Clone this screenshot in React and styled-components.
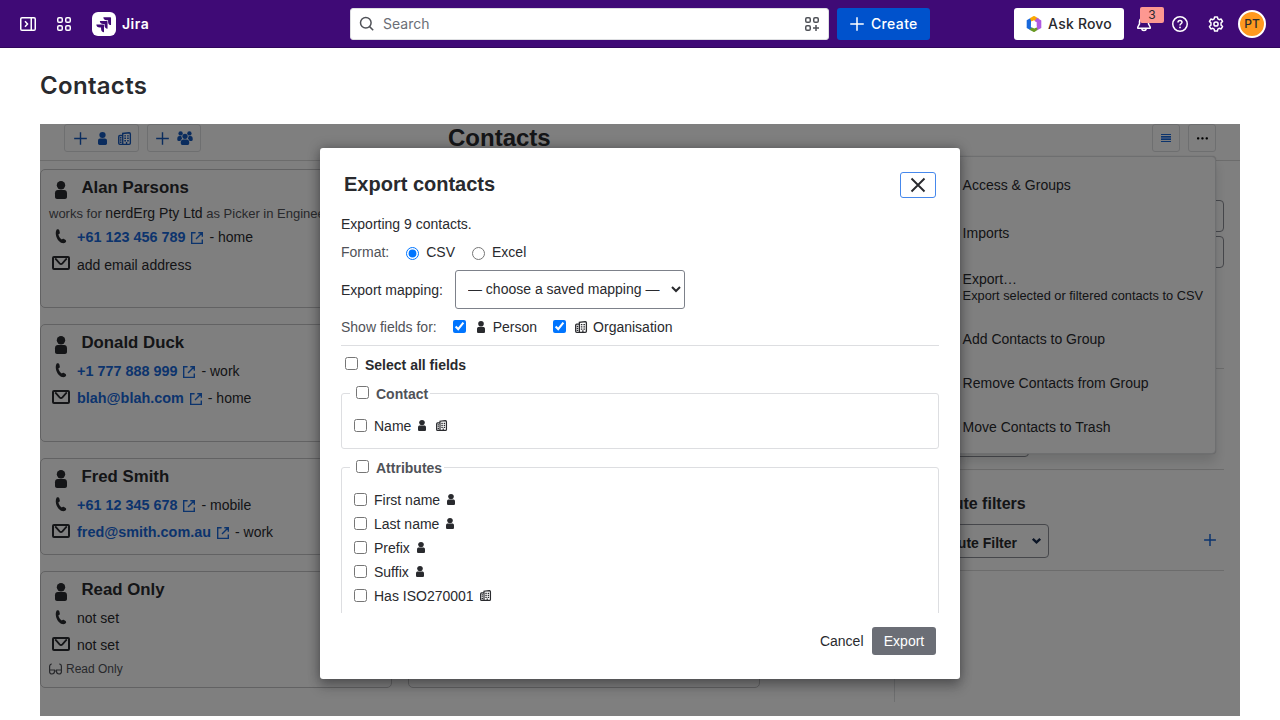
import React from 'react'
import styled, { createGlobalStyle } from 'styled-components'

const GlobalStyle = createGlobalStyle`
    * {
        box-sizing: border-box;
    }
    body {
        margin: 0;
        background: #fff;
        color: #292a2e;
        font-family: 'Liberation Sans', Arial, sans-serif;
        font-size: 14px;
        line-height: 20px;
        overflow: hidden;
    }
`

/* ---------- icons ---------- */

const Svg = styled.svg`
    display: block;
    flex: none;
    overflow: visible;
`

const LineIcon = ({ size = 16, weight = 1.5, children }) => (
    <Svg width={size} height={size} viewBox="0 0 16 16" fill="none" stroke="currentColor" strokeWidth={weight}>
        {children}
    </Svg>
)

const SidebarIcon = () => (
    <LineIcon>
        <rect x="0.75" y="1.75" width="14.5" height="12.5" rx="1.25" />
        <path d="M11.25 2v12M5 5.25 7.5 8 5 10.75" />
    </LineIcon>
)

const SwitcherIcon = () => (
    <LineIcon>
        <rect x="1.75" y="1.75" width="4.5" height="4.5" rx="1.25" />
        <rect x="9.75" y="1.75" width="4.5" height="4.5" rx="1.25" />
        <rect x="1.75" y="9.75" width="4.5" height="4.5" rx="1.25" />
        <rect x="9.75" y="9.75" width="4.5" height="4.5" rx="1.25" />
    </LineIcon>
)

const AppsAddIcon = () => (
    <LineIcon>
        <rect x="1.75" y="1.75" width="4.5" height="4.5" rx="1.25" />
        <rect x="9.75" y="1.75" width="4.5" height="4.5" rx="1.25" />
        <rect x="1.75" y="9.75" width="4.5" height="4.5" rx="1.25" />
        <path d="M12 9v6M9 12h6" />
    </LineIcon>
)

const SearchIcon = () => (
    <LineIcon>
        <circle cx="6.8" cy="6.8" r="5.3" />
        <path d="m10.6 10.6 3.6 3.6" />
    </LineIcon>
)

const PlusIcon = ({ size = 16, weight = 1.5 }) => (
    <LineIcon size={size} weight={weight}>
        <path d="M8 1.25v13.5M1.25 8h13.5" />
    </LineIcon>
)

const BellIcon = () => (
    <LineIcon>
        <path d="M3.5 5.6a4.5 4.5 0 0 1 9 0v2.2l1.7 3.2v1.25H1.8V11l1.7-3.2zM5.6 12.5a2.45 2.45 0 0 0 4.8 0" strokeLinejoin="round" />
    </LineIcon>
)

const HelpIcon = () => (
    <LineIcon>
        <circle cx="8" cy="8" r="7.25" />
        <path d="M6 6.4C6 5.2 6.9 4.5 8 4.5s2 .7 2 1.8c0 1.5-2 1.5-2 3.2" />
        <circle cx="8" cy="11.4" r="0.9" fill="currentColor" stroke="none" />
    </LineIcon>
)

const GearIcon = () => (
    <LineIcon>
        <path
            strokeLinejoin="round"
            d="M6.6.9h2.8l.45 2 1.35.78 1.95-.6 1.4 2.42-1.5 1.4v2.2l1.5 1.4-1.4 2.42-1.95-.6-1.35.78-.45 2H6.6l-.45-2-1.35-.78-1.95.6L1.45 10.5l1.5-1.4V6.9l-1.5-1.4 1.4-2.42 1.95.6 1.35-.78z"
        />
        <circle cx="8" cy="8" r="2.1" />
    </LineIcon>
)

const JiraMark = () => (
    <Svg width="24" height="24" viewBox="0 0 24 24">
        <rect width="24" height="24" rx="6" fill="#fff" />
        <path
            fill="#3f0a76"
            d="M9.051 15.434H7.734c-1.988 0-3.413-1.218-3.413-3h7.085c.367 0 .605.26.605.63v7.13c-1.772 0-2.96-1.435-2.96-3.434zm3.5-3.543h-1.318c-1.987 0-3.413-1.196-3.413-2.978h7.085c.367 0 .627.239.627.608v7.13c-1.772 0-2.981-1.435-2.981-3.434zm3.52-3.522h-1.317c-1.987 0-3.413-1.217-3.413-3h7.085c.367 0 .605.262.605.61v7.129c-1.771 0-2.96-1.435-2.96-3.434z"
        />
    </Svg>
)

const RovoMark = () => (
    <Svg width="16" height="16" viewBox="0 0 16 16">
        <path fill="#1868db" d="M.7 4.2 5 1.7v4.9L4.9 11l2.9 1.8-2.6 1.6L.7 12z" />
        <path fill="#fca700" d="M3.9 2.3 7.2.3a1.6 1.6 0 0 1 1.6 0l4.2 2.4-2.4 3L8 4.3 5.4 5.6z" />
        <path fill="#af59e1" d="m11 1.8 4.3 2.8v7.5l-4.6 2.3V6.3L8.6 5z" />
        <path fill="#6a9a23" d="m3.2 13.4 5-3.2 3.1 1.7v2.2L8.8 15.7a1.6 1.6 0 0 1-1.6 0z" />
        <path fill="#fff" d="m5.4 6.1 2.4-1.4v3.8l2.6 1.7v1.2l-2.2 1.2-2.8-1.6z" />
    </Svg>
)

const PersonIcon = ({ width = 12, height = 18 }) => (
    <Svg width={width} height={height} viewBox="0 0 12 18" preserveAspectRatio="none" fill="currentColor">
        <circle cx="6" cy="4.2" r="4.2" />
        <path d="M0 12.2C0 10 1.2 9.1 2.8 9.1h6.4c1.6 0 2.8.9 2.8 3.1V16c0 1.3-.9 2-2 2H2c-1.1 0-2-.7-2-2z" />
    </Svg>
)

const OrgIcon = ({ size = 13 }) => (
    <Svg width={size} height={size} viewBox="0 0 14 14" fill="none" stroke="currentColor" strokeWidth="1.5">
        <path d="M5.1 13.3V1.6L12 .8q1.3 0 1.3 1.3v10q0 1.2-1.3 1.2H2q-1.2 0-1.2-1.2V5q0-1.3 1.2-1.3h3" />
        <path d="M6.8 4.2h1.8M9.8 4.2h1.8M6.8 6.8h1.8M9.8 6.8h1.8M6.8 9.4h1.8M9.8 9.4h1.8M2 6.2h1.8M2 8.6h1.8M2 11h1.8M9.2 13.2v-2.4" />
    </Svg>
)

const GroupIcon = () => (
    <Svg width="16" height="14" viewBox="0 0 16 14" fill="currentColor">
        <circle cx="3.6" cy="2.4" r="2.2" />
        <circle cx="12.4" cy="2.4" r="2.2" />
        <path d="M.3 7.6C.3 5.8 1.3 5 2.6 5h1.6l.9 2.6L3.3 10H1.5C.7 10 .3 9.5.3 8.8zM15.7 7.6c0-1.8-1-2.6-2.3-2.6h-1.6l-.9 2.6 1.8 2.4h1.8c.8 0 1.2-.5 1.2-1.2z" />
        <circle cx="8" cy="5.3" r="2.6" />
        <path d="M3.8 11.2c0-1.9 1-2.8 2.6-2.8h3.2c1.6 0 2.6.9 2.6 2.8v1c0 1.1-.7 1.8-1.8 1.8H5.6c-1.1 0-1.8-.7-1.8-1.8z" />
    </Svg>
)

const PhoneIcon = () => (
    <Svg width="12" height="15" viewBox="0 0 12 15" fill="currentColor">
        <path d="M1.7.6C2.8-.2 4 .1 4.3 1.2l.5 2.3c.2 1-.5 1.5-1.4 1.8.3 2.2 1.6 4.2 3.4 5.2.7-.7 1.4-1 2.2-.5l1.6 1.1c1 .8.7 2-.5 2.7-1.8 1-4.4.2-6.5-2.1C.9 8.7-.2 3.4 1.7.6z" />
    </Svg>
)

const MailIcon = () => (
    <Svg width="18" height="14" viewBox="0 0 18 14" fill="none" stroke="currentColor" strokeWidth="2">
        <rect x="1" y="1" width="16" height="12" rx="1" />
        <path d="M3.2 2.4 7.6 7.4q1.4 1.5 2.8 0l4.4-5" strokeWidth="1.8" />
    </Svg>
)

const ExternalIcon = () => (
    <Svg width="12" height="12" viewBox="0 0 12 12" fill="none" stroke="currentColor" strokeWidth="1.4">
        <path d="M4.6.8H.7v10.6h10.6V7.4M7.3.7h4v4M11.2.8 5 7" />
    </Svg>
)

const GlassesIcon = () => (
    <Svg width="13" height="12" viewBox="0 0 13 12" fill="none" stroke="currentColor" strokeWidth="1.2">
        <path d="M2.8 1C1.3 1 .6 2.2.6 3.6v5.2c0 1.5.8 2.2 2.4 2.2s2.5-.8 2.5-2.4V7H.8M10.2 1c1.5 0 2.2 1.2 2.2 2.6v5.2c0 1.5-.8 2.2-2.4 2.2s-2.5-.8-2.5-2.4V7h4.7M5.5 8h2" />
    </Svg>
)

const ListIcon = () => (
    <Svg width="10" height="8" viewBox="0 0 10 8">
        <rect y="2" width="10" height="4" fill="#669df1" />
        <path d="M0 .5h10M0 2.5h10M0 5.5h10M0 7.5h10" stroke="#1868db" strokeWidth="1" />
    </Svg>
)

const MoreIcon = () => (
    <Svg width="11" height="3" viewBox="0 0 11 3" fill="#000">
        <rect x="0" y="0.3" width="2.3" height="2.3" rx="0.8" />
        <rect x="4.3" y="0.3" width="2.3" height="2.3" rx="0.8" />
        <rect x="8.6" y="0.3" width="2.3" height="2.3" rx="0.8" />
    </Svg>
)

const CloseIcon = () => (
    <Svg width="14" height="14" viewBox="0 0 14 14" stroke="#292a2e" strokeWidth="1.9">
        <path d="m.5.5 13 13M13.5.5l-13 13" />
    </Svg>
)

const ChevronIcon = () => (
    <Svg width="9" height="6" viewBox="0 0 9 6" fill="none" stroke="#172b4d" strokeWidth="2.4">
        <path d="m.8.8 3.7 3.6L8.2.8" />
    </Svg>
)

/* ---------- top navigation ---------- */

const TopBar = styled.header`
    display: flex;
    align-items: center;
    height: 48px;
    padding: 0 14px 0 20px;
    background: #3f0a76;
    border-bottom: 1px solid #30065c;
    color: #fff;
    font: 500 14px/20px Inter, sans-serif;
`

const NavStart = styled.div`
    display: flex;
    align-items: center;
    gap: 20px;
    width: 330px;
    padding-top: 1px;
`

const Brand = styled.div`
    display: flex;
    align-items: center;
    gap: 6px;
    font-weight: 600;
    letter-spacing: 0.5px;
`

const SearchBox = styled.div`
    display: flex;
    align-items: center;
    gap: 8px;
    width: 479px;
    height: 32px;
    margin-top: 1px;
    padding: 0 8px;
    border: 1px solid #dddee1;
    border-radius: 3px;
    background: #fff;
    color: #505258;
    font-weight: 400;

    span {
        flex: 1;
        color: #6b6e76;
    }
`

const NavButton = styled.button`
    display: flex;
    align-items: center;
    gap: ${props => props.$gap}px;
    height: 32px;
    margin: 1px 0 0 8px;
    padding: 0 12px;
    border: 0;
    border-radius: 3px;
    background: ${props => (props.$primary ? '#0052cc' : '#fff')};
    color: ${props => (props.$primary ? '#fff' : '#292a2e')};
    font: inherit;
    letter-spacing: ${props => (props.$primary ? 0.35 : 0.2)}px;
    white-space: nowrap;
`

const NavEnd = styled.div`
    display: flex;
    align-items: center;
    margin: 1px 0 0 auto;

    ${NavButton} {
        margin: 0 12px 0 0;
    }
`

const NavIcon = styled.div`
    position: relative;
    margin-right: 20px;
`

const Badge = styled.span`
    position: absolute;
    top: -9px;
    left: 4px;
    width: 24px;
    height: 16px;
    border-radius: 2px;
    background: #fd9891;
    color: #292a2e;
    font-size: 12px;
    font-weight: 400;
    line-height: 16px;
    text-align: center;
`

const Avatar = styled.div`
    display: flex;
    align-items: center;
    justify-content: center;
    width: 28px;
    height: 28px;
    margin-left: -6px;
    border: 2px solid #fff;
    border-radius: 50%;
    background: #ff991f;
    color: #292a2e;
    font-size: 12px;
    font-weight: 500;
`

/* ---------- page ---------- */

const PageTitle = styled.h1`
    height: 76px;
    margin: 0;
    padding: 24px 40px 0;
    font: 600 24px/28px Inter, sans-serif;
    letter-spacing: 0.3px;
`

const Frame = styled.main`
    position: relative;
    width: 1200px;
    height: 592px;
    margin: 0 40px;
    overflow: hidden;
`

const Toolbar = styled.div`
    display: flex;
    align-items: flex-start;
    height: 37px;
    padding: 0 24px;
    border-bottom: 1px solid #d8d8d8;
`

const ToolGroup = styled.div`
    display: flex;
    gap: 8px;
    width: ${props => (props.$wide ? '384px' : 'auto')};
`

const ToolButton = styled.button`
    display: flex;
    align-items: center;
    justify-content: center;
    gap: ${props => props.$gap || 0}px;
    width: ${props => props.$width}px;
    height: 28px;
    padding: 0;
    border: 1px solid #dddee1;
    border-radius: 3px;
    background: transparent;
    color: #1558bc;
`

const AppTitle = styled.h2`
    flex: 1;
    margin: 0;
    font-size: 24px;
    line-height: 28px;
`

const Columns = styled.div`
    display: flex;
    justify-content: space-between;
    padding-right: 16px;
`

const CardGrid = styled.div`
    display: grid;
    grid-template-columns: repeat(2, 352px);
    grid-template-rows: 139px 118px 97px 117px;
    gap: 16px;
    padding-top: 8px;
`

const Card = styled.section`
    padding: 6px 8px;
    border: 1px solid #c4c4c6;
    border-radius: 5px;
    overflow: hidden;
    white-space: nowrap;
`

const CardName = styled.h3`
    display: flex;
    gap: 14.5px;
    height: 26.5px;
    margin: 0;
    padding-left: 6px;
    font-size: 16.8px;
    line-height: 24px;

    svg {
        margin-top: 5px;
    }
`

const WorksFor = styled.div`
    height: 21px;
    color: #505258;
    font-size: 13px;
    line-height: 20px;

    span {
        color: #292a2e;
        font-size: 14px;
    }
`

const ContactRow = styled.div`
    display: flex;
    align-items: center;
    height: 27px;
    line-height: 27px;
`

const RowIcon = styled.div`
    display: flex;
    justify-content: center;
    width: 24px;
    margin: 0 4px 2px 0;
`

const ContactLink = styled.a`
    display: flex;
    align-items: center;
    gap: 6px;
    margin-right: 6px;
    color: #1868db;
    font-size: 14.4px;
    font-weight: bold;

    svg {
        margin-top: 2px;
    }
`

const AddDetail = styled.div`
    padding-top: 2px;
`

const ReadOnly = styled.div`
    display: flex;
    align-items: center;
    gap: 4px;
    color: #505258;
    font-size: 12px;
`

const Sidebar = styled.aside`
    width: 330px;
    height: 541px;
    padding: 39px 0 0 16px;
    border-left: 1px solid #dddee1;
`

const FilterInput = styled.div`
    height: 32px;
    margin-bottom: 4px;
    border: 1px solid #8c8f97;
    border-radius: 4px;
`

const FilterSection = styled.div`
    display: flex;
    flex-direction: column;
    justify-content: flex-end;
    height: ${props => props.$height}px;
    padding-bottom: 12px;
    border-bottom: 1px solid #d8d8d8;
`

const FilterTitle = styled.h4`
    margin: 0 0 10px;
    font-size: 16px;
`

const FilterRow = styled.div`
    display: flex;
    align-items: center;
    justify-content: space-between;
    padding-right: 7px;
    color: #1868db;

    > svg {
        margin-bottom: 2px;
    }
`

const FilterSelect = styled.div`
    display: flex;
    align-items: center;
    justify-content: space-between;
    width: ${props => props.$width}px;
    height: 34px;
    padding: 3px 7.5px 0 8.5px;
    border: 1px solid #8c8f97;
    border-radius: 4px;
    color: #292a2e;
    font-weight: bold;

    svg {
        margin-bottom: 3px;
    }
`

const Menu = styled.ul`
    position: absolute;
    top: 32px;
    right: 24px;
    width: 267px;
    height: 298px;
    margin: 0;
    padding: 4px 12px 4px 12.6px;
    border: 1px solid #dddee1;
    border-radius: 4px;
    background: #fff;
    box-shadow: 0 8px 12px rgba(30, 31, 33, 0.15), 0 0 1px rgba(30, 31, 33, 0.3);
    list-style: none;
    white-space: nowrap;
`

const MenuItem = styled.li`
    display: flex;
    flex-direction: column;
    justify-content: center;
    height: ${props => props.$height}px;
    line-height: 17px;

    small {
        font-size: 12.8px;
        line-height: 16px;
    }
`

/* ---------- dialog ---------- */

const Overlay = styled.div`
    position: absolute;
    inset: 0;
    display: flex;
    align-items: flex-start;
    justify-content: center;
    padding-top: 24px;
    background: rgba(0, 0, 0, 0.5);
`

const Dialog = styled.div`
    display: flex;
    flex-direction: column;
    width: 640px;
    height: 531px;
    border-radius: 3px;
    background: #fff;
    box-shadow: 0 8px 12px rgba(30, 31, 33, 0.3), 0 0 12px rgba(30, 31, 33, 0.4);
`

const DialogHeader = styled.div`
    display: flex;
    align-items: flex-start;
    justify-content: space-between;
    height: 62px;
    padding: 24px 24px 0;

    h2 {
        margin: 0;
        font-size: 20px;
        line-height: 24px;
    }
`

const CloseButton = styled.button`
    display: flex;
    align-items: center;
    justify-content: center;
    width: 36px;
    height: 26px;
    padding: 0;
    border: 1px solid #4688ec;
    border-radius: 3px;
    background: #fff;
`

const DialogBody = styled.div`
    height: 403px;
    padding: 4px 21px 0;
    overflow: hidden;
`

const FormRow = styled.div`
    display: flex;
    align-items: center;
    height: ${props => props.$height}px;
`

const RowLabel = styled.span`
    margin-right: ${props => props.$gap}px;
    color: ${props => (props.$subtle ? '#505258' : 'inherit')};
`

const Option = styled.label`
    display: flex;
    align-items: center;
    margin-right: ${props => props.$gap || 0}px;

    input {
        width: 13px;
        height: 13px;
        margin: ${props => (props.$radio ? '3px 7px 0 0' : '0 9px 1px 0')};
    }
    svg {
        margin-right: 6px;
    }
    svg[width='8'] {
        margin: 0 8px 0 2px;
    }
`

const MappingSelect = styled.select`
    width: 230px;
    height: 39px;
    padding: 0 8px 2px;
    border: 1px solid #7d818a;
    border-radius: 3px;
    background: #fff;
    color: #292a2e;
    font: inherit;
`

const SelectAll = styled.label`
    display: flex;
    align-items: center;
    height: 38px;
    padding-left: 4px;
    border-top: 1px solid #dddee1;
    font-weight: bold;

    input {
        margin: 0 7px 3px 0;
    }
`

const Fieldset = styled.fieldset`
    min-height: ${props => props.$minHeight || 0}px;
    margin: 0 0 8px;
    padding: 11px 12px 10px;
    border: 1px solid #dddee1;
    border-radius: 3px;
`

const Legend = styled.legend`
    display: flex;
    align-items: center;
    height: 20px;
    margin-left: -4px;
    padding: 2px 2px 0 6px;
    color: #505258;
    font-weight: bold;

    input {
        margin: 0 7px 3px 0;
    }
`

const FieldRow = styled.label`
    display: flex;
    align-items: center;
    height: 24px;

    input {
        margin: 0 7px 1px 0;
    }
    svg {
        margin: 0 2px 2px 7px;
    }
    svg[width='11'] {
        margin-left: ${props => (props.$both ? 8 : 6)}px;
    }
`

const DialogFooter = styled.div`
    display: flex;
    justify-content: flex-end;
    padding: 14px 24px 0;
`

const FooterButton = styled.button`
    height: 28px;
    padding: 0 ${props => (props.$solid ? 0 : 8.5)}px;
    width: ${props => (props.$solid ? '64px' : 'auto')};
    border: 0;
    border-radius: 3px;
    background: ${props => (props.$solid ? '#6b6e76' : 'transparent')};
    color: ${props => (props.$solid ? '#fff' : '#292a2e')};
    font: inherit;
`

const contacts = [
    {
        name: 'Alan Parsons',
        company: 'nerdErg Pty Ltd',
        role: 'as Picker in Engineering',
        phone: '+61 123 456 789',
        phoneType: 'home',
        emailText: <AddDetail>add email address</AddDetail>,
    },
    { name: 'Donald Duck', phone: '+1 777 888 999', phoneType: 'work', email: 'blah@blah.com', emailType: 'home' },
    { name: 'Fred Smith', phone: '+61 12 345 678', phoneType: 'mobile', email: 'fred@smith.com.au', emailType: 'work' },
    { name: 'Read Only', emailText: 'not set', readOnly: true },
]

const attributes = [
    { label: 'First name', person: true },
    { label: 'Last name', person: true },
    { label: 'Prefix', person: true },
    { label: 'Suffix', person: true },
    { label: 'Has ISO270001', org: true },
]

const ContactDetail = ({ icon, value, type, text = 'not set' }) => (
    <ContactRow>
        <RowIcon>{icon}</RowIcon>
        {value ? (
            <>
                <ContactLink>
                    {value} <ExternalIcon />
                </ContactLink>
                <span>- {type}</span>
            </>
        ) : (
            <div>{text}</div>
        )}
    </ContactRow>
)

const ContactCard = ({ name, company, role, phone, phoneType, email, emailType, emailText, readOnly }) => (
    <Card>
        <CardName>
            <PersonIcon />
            {name}
        </CardName>
        {company && (
            <WorksFor>
                works for <span>{company}</span> {role}
            </WorksFor>
        )}
        <ContactDetail icon={<PhoneIcon />} value={phone} type={phoneType} />
        <ContactDetail icon={<MailIcon />} value={email} type={emailType} text={emailText} />
        {readOnly && (
            <ReadOnly>
                <GlassesIcon />
                Read Only
            </ReadOnly>
        )}
    </Card>
)

const Field = ({ label, person, org }) => (
    <FieldRow $both={person && org}>
        <input type="checkbox" />
        {label}
        {person && <PersonIcon width={8} height={11} />}
        {org && <OrgIcon size={11} />}
    </FieldRow>
)

const ExportDialog = () => (
    <Dialog>
        <DialogHeader>
            <h2>Export contacts</h2>
            <CloseButton>
                <CloseIcon />
            </CloseButton>
        </DialogHeader>
        <DialogBody>
            <FormRow $height={20}>Exporting 9 contacts.</FormRow>
            <FormRow $height={36}>
                <RowLabel $subtle $gap={17}>
                    Format:
                </RowLabel>
                <Option $radio $gap={17}>
                    <input type="radio" name="format" defaultChecked />
                    CSV
                </Option>
                <Option $radio>
                    <input type="radio" name="format" />
                    Excel
                </Option>
            </FormRow>
            <FormRow $height={39}>
                <RowLabel $gap={12}>Export mapping:</RowLabel>
                <MappingSelect>
                    <option>— choose a saved mapping —</option>
                </MappingSelect>
            </FormRow>
            <FormRow $height={36}>
                <RowLabel $subtle $gap={16}>
                    Show fields for:
                </RowLabel>
                <Option $gap={16}>
                    <input type="checkbox" defaultChecked />
                    <PersonIcon width={8} height={12} />
                    Person
                </Option>
                <Option>
                    <input type="checkbox" defaultChecked />
                    <OrgIcon size={12} />
                    Organisation
                </Option>
            </FormRow>
            <SelectAll>
                <input type="checkbox" />
                Select all fields
            </SelectAll>
            <Fieldset>
                <Legend>
                    <input type="checkbox" />
                    Contact
                </Legend>
                <Field label="Name" person org />
            </Fieldset>
            <Fieldset $minHeight={180}>
                <Legend>
                    <input type="checkbox" />
                    Attributes
                </Legend>
                {attributes.map(item => (
                    <Field key={item.label} {...item} />
                ))}
            </Fieldset>
        </DialogBody>
        <DialogFooter>
            <FooterButton>Cancel</FooterButton>
            <FooterButton $solid>Export</FooterButton>
        </DialogFooter>
    </Dialog>
)

const App = () => (
    <>
        <GlobalStyle />
        <TopBar>
            <NavStart>
                <SidebarIcon />
                <SwitcherIcon />
                <Brand>
                    <JiraMark />
                    Jira
                </Brand>
            </NavStart>
            <SearchBox>
                <SearchIcon />
                <span>Search</span>
                <AppsAddIcon />
            </SearchBox>
            <NavButton $primary $gap={6}>
                <PlusIcon />
                Create
            </NavButton>
            <NavEnd>
                <NavButton $gap={6}>
                    <RovoMark />
                    Ask Rovo
                </NavButton>
                <NavIcon>
                    <BellIcon />
                    <Badge>3</Badge>
                </NavIcon>
                <NavIcon>
                    <HelpIcon />
                </NavIcon>
                <NavIcon>
                    <GearIcon />
                </NavIcon>
                <Avatar>PT</Avatar>
            </NavEnd>
        </TopBar>
        <PageTitle>Contacts</PageTitle>
        <Frame>
            <Toolbar>
                <ToolGroup $wide>
                    <ToolButton $width={75} $gap={10.5}>
                        <PlusIcon size={15} />
                        <PersonIcon width={9} height={13} />
                        <OrgIcon size={13} />
                    </ToolButton>
                    <ToolButton $width={54} $gap={7}>
                        <PlusIcon size={15} />
                        <GroupIcon />
                    </ToolButton>
                </ToolGroup>
                <AppTitle>Contacts</AppTitle>
                <ToolGroup>
                    <ToolButton $width={28}>
                        <ListIcon />
                    </ToolButton>
                    <ToolButton $width={28}>
                        <MoreIcon />
                    </ToolButton>
                </ToolGroup>
            </Toolbar>
            <Columns>
                <CardGrid>
                    {contacts.map(contact => (
                        <React.Fragment key={contact.name}>
                            <ContactCard {...contact} />
                            <Card />
                        </React.Fragment>
                    ))}
                </CardGrid>
                <Sidebar>
                    <FilterInput />
                    <FilterInput />
                    <FilterSection $height={97} />
                    <FilterSection $height={101}>
                        <FilterSelect $width={118} />
                    </FilterSection>
                    <FilterSection $height={101}>
                        <FilterTitle>Attribute filters</FilterTitle>
                        <FilterRow>
                            <FilterSelect $width={138}>
                                Attribute Filter
                                <ChevronIcon />
                            </FilterSelect>
                            <PlusIcon size={14} weight={1.7} />
                        </FilterRow>
                    </FilterSection>
                </Sidebar>
            </Columns>
            <Menu>
                <MenuItem $height={48}>Access &amp; Groups</MenuItem>
                <MenuItem $height={48}>Imports</MenuItem>
                <MenuItem $height={60}>
                    Export…
                    <small>Export selected or filtered contacts to CSV</small>
                </MenuItem>
                <MenuItem $height={44}>Add Contacts to Group</MenuItem>
                <MenuItem $height={44}>Remove Contacts from Group</MenuItem>
                <MenuItem $height={44}>Move Contacts to Trash</MenuItem>
            </Menu>
            <Overlay>
                <ExportDialog />
            </Overlay>
        </Frame>
    </>
)

export default App
